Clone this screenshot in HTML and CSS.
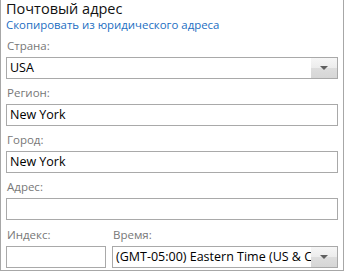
FILE: index.html
```html
<!DOCTYPE html>
<html lang="ru">
<head>
    <meta charset="UTF-8">
    <title>Почтовый адрес</title>
    <link rel="stylesheet" href="styles.css">
</head>
<body>

<div class="panel">
    <h2 class="panel-title">Почтовый адрес</h2>
    <a class="copy-link" href="#">Скопировать из юридического адреса</a>

    <div class="field">
        <label>Страна:</label>
        <div class="combo">
            <span class="combo-text">USA</span>
            <span class="combo-btn"><span class="arrow"></span></span>
        </div>
    </div>
    <div class="field">
        <label>Регион:</label>
        <div class="textbox">New York</div>
    </div>
    <div class="field">
        <label>Город:</label>
        <div class="textbox">New York</div>
    </div>
    <div class="field">
        <label>Адрес:</label>
        <div class="textbox"></div>
    </div>
    <div class="field-row">
        <div class="field field-zip">
            <label>Индекс:</label>
            <div class="textbox"></div>
        </div>
        <div class="field field-time">
            <label>Время:</label>
            <div class="combo">
                <span class="combo-text">(GMT-05:00) Eastern Time (US &amp; Canada)</span>
                <span class="combo-btn"><span class="arrow"></span></span>
            </div>
        </div>
    </div>
</div>

</body>
</html>
```

FILE: styles.css
```css
body {
    margin: 0;
    padding: 0;
    background: #fff;
    font-family: 'Open Sans', 'Noto Sans', sans-serif;
}
.panel {
    width: 332px;
    height: 270px;
    border: 1px solid #a7a7a7;
    border-top: none;
    padding: 0 5px;
}
.panel-title {
    margin: 0;
    font-size: 14.5px;
    font-weight: normal;
    line-height: 18px;
    color: #111;
}
.copy-link {
    display: block;
    font-size: 11.4px;
    line-height: 14px;
    color: #1b6ec2;
    text-decoration: none;
}
.field {
    margin-top: 6px;
}
.field label {
    display: block;
    font-size: 11.5px;
    line-height: 16px;
    color: #777;
    margin-bottom: 3px;
    padding-left: 1px;
}
.field-row {
    margin-top: 7px;
}
.textbox,
.combo {
    box-sizing: border-box;
    height: 22px;
    border: 1px solid #a9a9a9;
    background: #fff;
    font-size: 12.5px;
    line-height: 20px;
    padding: 0 3px;
    color: #000;
}
.combo {
    display: flex;
    padding-right: 0;
}
.combo-text {
    flex: 1;
    min-width: 0;
    overflow: hidden;
    white-space: nowrap;
}
.combo-btn {
    flex: 0 0 26px;
    display: flex;
    align-items: center;
    justify-content: center;
    background: linear-gradient(#f6f6f6 0%, #ececec 50%, #dddddd 50%, #d6d6d6 100%);
}
.arrow {
    width: 0;
    height: 0;
    border-left: 4px solid transparent;
    border-right: 4px solid transparent;
    border-top: 4px solid #5f5f5f;
}
.field-row {
    display: flex;
    gap: 6px;
}
.field-row .field {
    margin-top: 0;
}
.field-zip {
    flex: 0 0 100px;
}
.field-time {
    flex: 1;
    min-width: 0;
}
```
